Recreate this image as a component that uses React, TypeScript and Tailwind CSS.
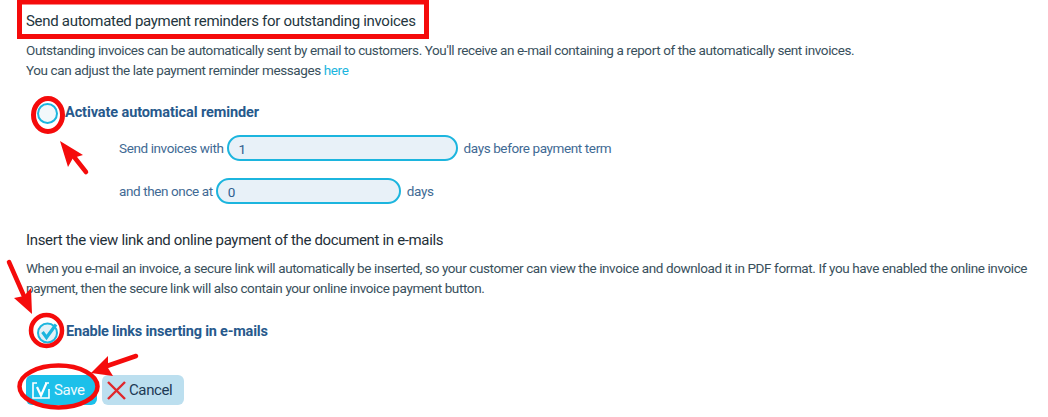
const inputClass =
  'h-[26px] rounded-[13px] border-2 border-[#1cb5de] bg-[#e8f1f8] pl-[10px] pr-3 pt-0.5 text-[13.5px] text-[#2f5f8f] outline-none'

function Annotations() {
  return (
    <svg className="pointer-events-none absolute inset-0" width="1048" height="417" fill="none">
      <rect x="19.5" y="2" width="407" height="34.5" stroke="#f50b0b" strokeWidth="5" />
      <ellipse cx="48" cy="115" rx="14.5" ry="16.5" stroke="#f50b0b" strokeWidth="5" />
      <path d="M86 172 L71 153" stroke="#f50b0b" strokeWidth="4.5" strokeLinecap="round" />
      <path d="M60 141 L83 155 L73 158 L68 167 Z" fill="#f50b0b" />
      <path d="M9 262 L27 303" stroke="#f50b0b" strokeWidth="4.5" strokeLinecap="round" />
      <path d="M32 314 L14 298 L24 296 L31 288 Z" fill="#f50b0b" />
      <ellipse cx="46.5" cy="330.5" rx="15.5" ry="15.5" stroke="#f50b0b" strokeWidth="4.5" />
      <ellipse cx="58.5" cy="386.5" rx="39" ry="21" stroke="#f50b0b" strokeWidth="4.5" />
      <path d="M136 356 L104 367" stroke="#f50b0b" strokeWidth="4.5" strokeLinecap="round" />
      <path d="M91 373 L108 356 L108 368 L113 376 Z" fill="#f50b0b" />
    </svg>
  )
}

export default function App() {
  return (
    <div className="relative h-[417px] w-[1048px] overflow-hidden bg-white font-['Roboto',sans-serif] text-[13.5px] tracking-[-0.39px] text-[#39505c]">
      <div className="flex flex-col pl-[26px]">
        <h2 className="mt-[11px] whitespace-nowrap text-[15px] leading-[20px] font-normal tracking-[-0.3px] text-[#24363e]">
          Send automated payment reminders for outstanding invoices
        </h2>
        <p className="mt-[9px] whitespace-nowrap leading-[20px]">
          Outstanding invoices can be automatically sent by email to customers. You'll receive an e-mail containing a report of the automatically sent invoices.
          <br />
          You can adjust the late payment reminder messages <a className="text-[#1cb5de]">here</a>
        </p>

        <label className="mt-[21px] flex h-[24px] items-center">
          <span className="ml-[11px] mr-[7px] h-[21px] w-[21px] rounded-full border-2 border-[#1cb5de] bg-[#f2f8fb]" />
          <span className="text-[14.5px] font-bold tracking-[-0.1px] text-[#27598c]">Activate automatical reminder</span>
        </label>

        <div className="mt-[10px] ml-[93px] flex h-[26px] items-center gap-[3px] text-[#3f6a94]">
          <span>Send invoices with</span>
          <input readOnly value="1" className={`${inputClass} w-[231px]`} />
          <span className="ml-[3px]">days before payment term</span>
        </div>
        <div className="mt-[17px] ml-[93px] flex h-[26px] items-center gap-[3px] text-[#3f6a94]">
          <span>and then once at</span>
          <input readOnly value="0" className={`${inputClass} w-[185px]`} />
          <span className="ml-[3px]">days</span>
        </div>

        <h2 className="mt-[26px] whitespace-nowrap text-[15px] leading-[20px] font-normal tracking-[-0.34px] text-[#1f3038]">
          Insert the view link and online payment of the document in e-mails
        </h2>
        <p className="mt-[8px] whitespace-nowrap leading-[20px]">
          When you e-mail an invoice, a secure link will automatically be inserted, so your customer can view the invoice and download it in PDF format. If you have enabled the online invoice
          <br />
          payment, then the secure link will also contain your online invoice payment button.
        </p>

        <label className="mt-[22px] flex h-[24px] items-center">
          <svg className="ml-[10px] mr-[7px]" width="23" height="23" viewBox="0 0 23 23" fill="none">
            <circle cx="11.5" cy="12" r="9.5" fill="#e3f1f7" stroke="#1cb5de" strokeWidth="2" />
            <path d="M6.5 11 L10.5 16.5 L20 3.5" stroke="#1cb5de" strokeWidth="3.2" />
          </svg>
          <span className="text-[14.5px] font-bold tracking-[-0.2px] text-[#27598c]">Enable links inserting in e-mails</span>
        </label>

        <div className="mt-[31px] flex gap-[5px]">
          <button className="flex h-[30px] w-[71px] items-center gap-[4px] rounded-[6px] bg-[#1cc0ea] pl-[6px] text-[15px] text-[#eefbff]">
            <svg width="18" height="17" viewBox="0 0 18 17" fill="none">
              <path d="M17 7 V16 H1 V1 H5 M13 1 H17" stroke="white" strokeWidth="1.6" />
              <path d="M5 5 L9 13.5 L14.5 1" stroke="white" strokeWidth="2.2" />
            </svg>
            Save
          </button>
          <button className="flex h-[30px] w-[82px] items-center gap-[3px] rounded-[6px] bg-[#bcdfef] pl-[5px] text-[15px] text-[#1c3a55]">
            <svg width="19" height="19" viewBox="0 0 19 19" fill="none">
              <path d="M1 1 L18 18 M18 1 L1 18" stroke="#e0272b" strokeWidth="2.4" />
            </svg>
            Cancel
          </button>
        </div>
      </div>
      <Annotations />
    </div>
  )
}
